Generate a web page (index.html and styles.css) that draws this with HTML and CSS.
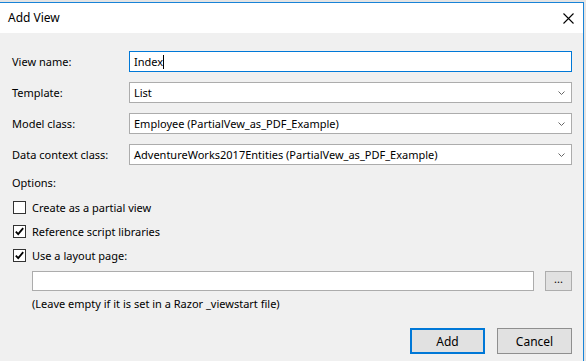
FILE: index.html
```html
<!DOCTYPE html>
<html>
<head>
<meta charset="utf-8">
<link rel="stylesheet" href="styles.css">
</head>
<body>
<div class="screen">
  <div class="window">
    <div class="titlebar">
      <span class="title">Add View</span>
      <svg class="close" width="11" height="11" viewBox="0 0 11 11"><path d="M0.5 0.5 L10.5 10.5 M10.5 0.5 L0.5 10.5" stroke="#000" stroke-width="1.1" fill="none"/></svg>
    </div>
    <div class="content">
      <div class="form">
        <label class="lbl">View name:</label>
        <div class="field focus"><span class="val">Index</span><span class="caret"></span></div>

        <label class="lbl">Template:</label>
        <div class="field"><span class="val">List</span><svg class="chev" width="7" height="4" viewBox="0 0 7 4"><path d="M0.5 0.5 L3.5 3.5 L6.5 0.5" stroke="#666" stroke-width="1" fill="none"/></svg></div>

        <label class="lbl">Model class:</label>
        <div class="field"><span class="val">Employee (PartialVew_as_PDF_Example)</span><svg class="chev" width="7" height="4" viewBox="0 0 7 4"><path d="M0.5 0.5 L3.5 3.5 L6.5 0.5" stroke="#666" stroke-width="1" fill="none"/></svg></div>

        <label class="lbl">Data context class:</label>
        <div class="field"><span class="val">AdventureWorks2017Entities (PartialVew_as_PDF_Example)</span><svg class="chev" width="7" height="4" viewBox="0 0 7 4"><path d="M0.5 0.5 L3.5 3.5 L6.5 0.5" stroke="#666" stroke-width="1" fill="none"/></svg></div>
      </div>

      <div class="options-label">Options:</div>
      <div class="checks">
        <div class="check"><span class="box"></span><span>Create as a partial view</span></div>
        <div class="check"><span class="box"><svg width="11" height="11" viewBox="0 0 11 11"><path d="M1.8 5.6 L4.2 8.2 L9.2 2.2" stroke="#000" stroke-width="1.8" fill="none"/></svg></span><span>Reference script libraries</span></div>
        <div class="check"><span class="box"><svg width="11" height="11" viewBox="0 0 11 11"><path d="M1.8 5.6 L4.2 8.2 L9.2 2.2" stroke="#000" stroke-width="1.8" fill="none"/></svg></span><span>Use a layout page:</span></div>
      </div>
      <div class="layout-row">
        <div class="layout-input"></div>
        <div class="browse">...</div>
      </div>
      <div class="hint">(Leave empty if it is set in a Razor _viewstart file)</div>
      <div class="actions">
        <div class="btn default">Add</div>
        <div class="btn">Cancel</div>
      </div>
    </div>
  </div>
</div>
</body>
</html>
```

FILE: styles.css
```css
html, body {
  margin: 0;
  padding: 0;
}
body {
  background: #f2f2f2;
  font-family: "Segoe UI", "Noto Sans", "Open Sans", sans-serif;
  font-size: 11px;
  color: #000;
  width: 586px;
  height: 361px;
  overflow: hidden;
}
.screen {
  padding-top: 2px;
  background: #e4e4e4;
  height: 359px;
}
.window {
  width: 583px;
  height: 358px;
  border-top: 1px solid #1883d7;
  border-right: 1px solid #1883d7;
  background: #f0f0f0;
  display: flex;
  flex-direction: column;
}
.titlebar {
  height: 30px;
  background: #fff;
  display: flex;
  align-items: center;
  justify-content: space-between;
  padding: 0 9px 0 8px;
}
.title {
  font-size: 12px;
  margin-top: -1px;
}
.content {
  flex: 1;
  padding: 18px 11px 0 12px;
  display: flex;
  flex-direction: column;
}
.form {
  display: grid;
  grid-template-columns: 117px 1fr;
  row-gap: 10px;
  align-items: center;
}
.lbl {
  line-height: 16px;
}
.field {
  height: 19px;
  border: 1px solid #acacac;
  background: #fff;
  display: flex;
  align-items: center;
  padding: 0 6px 0 4px;
}
.field.focus {
  border-color: #0078d7;
}
.val {
  flex: 1;
  white-space: nowrap;
}
.field.focus .val {
  flex: none;
}
.caret {
  width: 1px;
  height: 14px;
  background: #000;
}
.chev {
  display: block;
}
.options-label {
  margin-top: 10px;
  line-height: 16px;
}
.checks {
  display: flex;
  flex-direction: column;
  margin-top: 4px;
}
.check {
  height: 24px;
  display: flex;
  align-items: center;
  gap: 6px;
  padding-left: 1px;
}
.box {
  width: 11px;
  height: 11px;
  border: 1px solid #333;
  background: #fff;
  display: flex;
}
.box svg {
  display: block;
}
.layout-row {
  display: flex;
  align-items: center;
  margin-top: 4px;
  padding-left: 20px;
  gap: 11px;
}
.layout-input {
  flex: 1;
  height: 18px;
  border: 1px solid #acacac;
  background: #fff;
}
.browse {
  width: 25px;
  height: 18px;
  border: 1px solid #adadad;
  background: #e1e1e1;
  text-align: center;
  line-height: 14px;
  font-size: 11px;
}
.hint {
  margin-top: 5px;
  padding-left: 20px;
  line-height: 16px;
}
.actions {
  display: flex;
  justify-content: flex-end;
  gap: 12px;
  margin-top: 16px;
}
.btn {
  width: 73px;
  height: 24px;
  border: 1px solid #8f8f8f;
  background: #e1e1e1;
  display: flex;
  align-items: center;
  justify-content: center;
  font-size: 12px;
}
.btn.default {
  border-color: #0078d7;
  box-shadow: inset 0 0 0 1px #0078d7;
}
```
